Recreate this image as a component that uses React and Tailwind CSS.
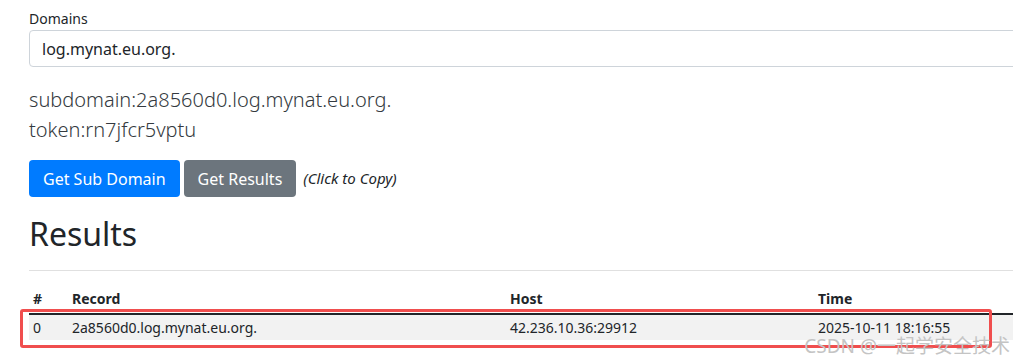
import React from "react";

export default function App() {
  const results = [
    { id: 0, record: "2a8560d0.log.mynat.eu.org.", host: "42.236.10.36:29912", time: "2025-10-11 18:16:55" },
  ];

  return (
    <div className="relative w-[1013px] h-[362px] overflow-hidden bg-white font-['Noto_Sans',sans-serif] text-[#212529]">
      <div className="w-[1100px] pl-[29px]">
        {/* domain input */}
        <div className="pt-[9px]">
          <label className="block text-[14px] leading-[20px] mb-[1px]">Domains</label>
          <div className="h-[37px] border border-[#ced4da] rounded-[4px] flex items-center pl-[12px] text-[16px]">
            log.mynat.eu.org.
          </div>
        </div>

        <div className="mt-[18px] text-[20px] font-light leading-[30px] text-[#343a40]">
          <div>subdomain:2a8560d0.log.mynat.eu.org.</div>
          <div>token:rn7jfcr5vptu</div>
        </div>

        <div className="mt-[15px] flex items-center gap-[4px]">
          <button className="h-[37px] px-[14px] rounded-[4px] bg-[#007bff] text-white text-[16px]">
            Get Sub Domain
          </button>
          <button className="h-[37px] px-[14px] rounded-[4px] bg-[#6c757d] text-white text-[16px]">
            Get Results
          </button>
          <span className="ml-[3px] italic text-[15px] text-[#212529]">(Click to Copy)</span>
        </div>

        <h2 className="mt-[15px] text-[32px] leading-[44px]">Results</h2>
        <hr className="mt-[14px] border-0 border-t border-[#e0e0e0]" />

        <table className="mt-[17px] w-[984px] text-[14px] border-collapse">
          <thead>
            <tr className="border-b-2 border-[#212529] text-left">
              <th className="w-[38px] pl-[4px] pb-[4px] font-bold">#</th>
              <th className="w-[438px] pl-[5px] pb-[4px] font-bold">Record</th>
              <th className="w-[308px] pl-[5px] pb-[4px] font-bold">Host</th>
              <th className="pl-[5px] pb-[4px] font-bold">Time</th>
            </tr>
          </thead>
          <tbody>
            {results.map((r) => (
              <tr key={r.id} className="bg-[#f2f2f2]">
                <td className="pl-[4px] h-[26px]">{r.id}</td>
                <td className="pl-[5px]">{r.record}</td>
                <td className="pl-[5px]">{r.host}</td>
                <td className="pl-[5px]">{r.time}</td>
              </tr>
            ))}
          </tbody>
        </table>
      </div>

      {/* highlight box drawn over the first row */}
      <div className="absolute left-[20px] top-[309px] w-[972px] h-[39px] border-[3px] border-[#f04e4e] rounded-[3px]" />

      {/* watermark */}
      <div className="absolute right-[3px] top-[335px] text-[19px] leading-[22px] text-[#c4c4c4] font-['Noto_Sans','Noto_Sans_CJK_SC',sans-serif]">
        CSDN @一起学安全技术
      </div>
    </div>
  );
}
